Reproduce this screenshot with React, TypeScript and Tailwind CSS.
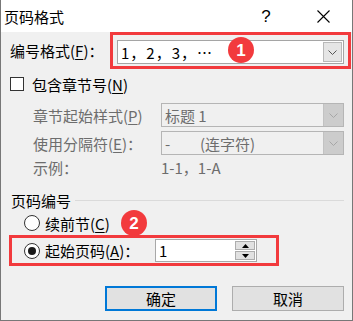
import React from "react";

function Chevron({ color }: { color: string }) {
  return (
    <svg width="9" height="5" viewBox="0 0 9 5">
      <path d="M0.5 0.5 L4.5 4.5 L8.5 0.5" fill="none" stroke={color} strokeWidth="1" />
    </svg>
  );
}

function U({ c }: { c: string }) {
  return (
    <>
      (<span className="underline underline-offset-2">{c}</span>)
    </>
  );
}

function Badge({ n, cls }: { n: string; cls: string }) {
  return (
    <div
      className={`absolute flex h-[26px] w-[26px] items-center justify-center rounded-full bg-[#f23a3d] text-[17px] font-bold leading-none text-white font-['Liberation_Sans',sans-serif] ${cls}`}
    >
      {n}
    </div>
  );
}

function Radio({ checked }: { checked?: boolean }) {
  return (
    <div className="flex h-[16px] w-[16px] shrink-0 items-center justify-center rounded-full border border-[#333333] bg-white">
      {checked && <div className="h-[8px] w-[8px] rounded-full bg-[#1a1a1a]" />}
    </div>
  );
}

export default function App() {
  return (
    <div className="relative h-[321px] w-[353px] overflow-hidden border-x border-b border-[#777777] bg-[#f0f0f0] font-['Noto_Sans_CJK_SC','Noto_Sans',sans-serif] text-[15px] text-black">
      {/* title bar */}
      <div className="flex h-[32px] items-center bg-white">
        <div className="pl-[3px] text-[15px] leading-none">页码格式</div>
        <div className="ml-auto flex w-[46px] items-center justify-center text-[17px] leading-none font-['Liberation_Sans',sans-serif]">
          ?
        </div>
        <div className="ml-[11px] mr-[6px] flex w-[46px] items-center justify-center">
          <svg width="13" height="13" viewBox="0 0 13 13">
            <path d="M0.5 0.5 L12.5 12.5 M12.5 0.5 L0.5 12.5" stroke="#000" strokeWidth="1.1" />
          </svg>
        </div>
      </div>

      {/* 编号格式 */}
      <div className="flex h-[37px] items-center pl-[9px]">
        <div className="w-[100px] whitespace-nowrap leading-none">
          编号格式<U c="F" />：
        </div>
        <div className="flex h-[37px] w-[241px] items-start border-[3px] border-[#f23a3d] pl-[4px] pt-[5px]">
          <div className="flex h-[24px] w-[227px] border border-[#a5a5a5] bg-white">
            <div className="flex flex-1 items-center pl-[3px] leading-none tracking-[1px]">1，2，3，…</div>
            <div className="m-[1px] flex w-[19px] items-center justify-center border border-[#b9b9b9] bg-[#e5e5e5]">
              <Chevron color="#555555" />
            </div>
          </div>
        </div>
      </div>

      {/* 包含章节号 */}
      <div className="flex h-[30px] items-center pl-[9px]">
        <div className="h-[14px] w-[14px] border border-[#333333] bg-white" />
        <div className="ml-[8px] leading-none">
          包含章节号<U c="N" />
        </div>
      </div>

      {/* 章节起始样式 */}
      <div className="mt-[4px] flex h-[24px] items-center pl-[32px] text-[#6d6d6d]">
        <div className="w-[128px] whitespace-nowrap leading-none">
          章节起始样式<U c="P" />
        </div>
        <div className="flex h-[24px] w-[183px] border border-[#b5b5b5] bg-[#f0f0f0]">
          <div className="flex flex-1 items-center whitespace-pre pl-[3px] leading-none">标题 1</div>
          <div className="flex w-[20px] items-center justify-center border-l border-[#c2c2c2] bg-[#cccccc]">
            <Chevron color="#a6a6a6" />
          </div>
        </div>
      </div>

      {/* 使用分隔符 */}
      <div className="mt-[4px] flex h-[24px] items-center pl-[32px] text-[#6d6d6d]">
        <div className="w-[128px] whitespace-nowrap leading-none">
          使用分隔符<U c="E" />：
        </div>
        <div className="flex h-[24px] w-[183px] border border-[#b5b5b5] bg-[#f0f0f0]">
          <div className="flex flex-1 items-center pl-[3px] leading-none">
            <span className="inline-block w-[35px]">-</span>
            <span>(连字符)</span>
          </div>
          <div className="flex w-[20px] items-center justify-center border-l border-[#c2c2c2] bg-[#cccccc]">
            <Chevron color="#a6a6a6" />
          </div>
        </div>
      </div>

      {/* 示例 */}
      <div className="flex h-[24px] items-center pl-[32px] text-[#6d6d6d]">
        <div className="w-[128px] leading-none">示例：</div>
        <div className="leading-none">1-1，1-A</div>
      </div>

      {/* 页码编号 */}
      <div className="mt-[11px] flex h-[20px] items-center pl-[10px] pr-[8px]">
        <div className="leading-none">页码编号</div>
        <div className="ml-[4px] h-px flex-1 bg-[#dadada]" />
      </div>

      {/* 续前节 */}
      <div className="mt-[1px] flex h-[24px] items-center pl-[23px]">
        <Radio />
        <div className="ml-[5px] leading-none">
          续前节<U c="C" />
        </div>
      </div>

      {/* 起始页码 */}
      <div className="ml-[8px] flex h-[31px] w-[270px] items-center border-[3px] border-[#f23a3d] pl-[12px]">
        <Radio checked />
        <div className="ml-[5px] w-[110px] whitespace-nowrap leading-none">
          起始页码<U c="A" />：
        </div>
        <div className="flex h-[23px] w-[102px] border border-[#a8a8a8] bg-white">
          <div className="flex flex-1 items-center pl-[3px] leading-none">1</div>
          <div className="flex w-[21px] flex-col justify-center gap-[1px] py-[1px] pr-[1px]">
            <div className="flex flex-1 items-center justify-center border border-[#adadad] bg-[#e1e1e1]">
              <svg width="7" height="4" viewBox="0 0 7 4">
                <path d="M3.5 0 L7 4 L0 4 Z" fill="#000" />
              </svg>
            </div>
            <div className="flex flex-1 items-center justify-center border border-[#adadad] bg-[#e1e1e1]">
              <svg width="7" height="4" viewBox="0 0 7 4">
                <path d="M0 0 L7 0 L3.5 4 Z" fill="#000" />
              </svg>
            </div>
          </div>
        </div>
      </div>

      {/* buttons */}
      <div className="mt-[20px] flex h-[25px] justify-end gap-[15px] pr-[8px]">
        <div className="flex w-[112px] items-center justify-center border-2 border-[#0078d7] bg-[#e1e1e1] leading-none">
          确定
        </div>
        <div className="flex w-[112px] items-center justify-center border border-[#adadad] bg-[#e1e1e1] leading-none">
          取消
        </div>
      </div>

      <Badge n="1" cls="left-[227px] top-[37px]" />
      <Badge n="2" cls="left-[120px] top-[210px]" />
    </div>
  );
}
